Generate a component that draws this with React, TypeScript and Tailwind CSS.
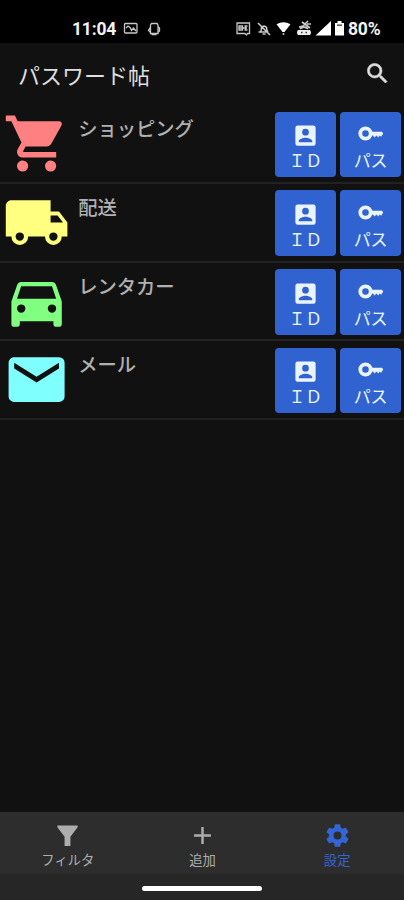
import React from "react";

const P = {
  cart: "M17 18a2 2 0 0 1 2 2 2 2 0 0 1-2 2 2 2 0 0 1-2-2c0-1.11.89-2 2-2M1 2h3.27l.94 2H20a1 1 0 0 1 1 1c0 .17-.05.34-.12.5l-3.58 6.47c-.34.61-1 1.03-1.75 1.03H8.1l-.9 1.63-.03.12a.25.25 0 0 0 .25.25H19v2H7a2 2 0 0 1-2-2c0-.35.09-.68.24-.96l1.36-2.45L3 4H1V2m6 16a2 2 0 0 1 2 2 2 2 0 0 1-2 2 2 2 0 0 1-2-2c0-1.11.89-2 2-2Z",
  truck: "M18 18.500a1.500 1.500 0 0 1-1.500-1.500 1.500 1.500 0 0 1 1.500-1.500 1.500 1.500 0 0 1 1.500 1.500 1.500 1.500 0 0 1-1.500 1.500m1.500-9 1.960 2.500H17V9.500m-11 9A1.500 1.500 0 0 1 4.500 17 1.500 1.500 0 0 1 6 15.500 1.500 1.500 0 0 1 7.500 17 1.500 1.500 0 0 1 6 18.500M20 8h-3V4H3c-1.110 0-2 .89-2 2v11h2a3 3 0 0 0 3 3 3 3 0 0 0 3-3h6a3 3 0 0 0 3 3 3 3 0 0 0 3-3h2v-5l-3-4Z",
  car: "M5 11l1.500-4.500h11L19 11m-1.500 5a1.500 1.500 0 0 1-1.500-1.500 1.500 1.500 0 0 1 1.500-1.500 1.500 1.500 0 0 1 1.500 1.500 1.500 1.500 0 0 1-1.500 1.500m-11 0A1.500 1.500 0 0 1 5 14.500 1.500 1.500 0 0 1 6.500 13 1.500 1.500 0 0 1 8 14.500 1.500 1.500 0 0 1 6.500 16M18.920 6c-.2-.58-.76-1-1.420-1h-11c-.66 0-1.220.42-1.420 1L3 12v8a1 1 0 0 0 1 1h1a1 1 0 0 0 1-1v-1h12v1a1 1 0 0 0 1 1h1a1 1 0 0 0 1-1v-8l-2.080-6Z",
  mail: "M20 8l-8 5-8-5V6l8 5 8-5m0-2H4c-1.110 0-2 .89-2 2v12a2 2 0 0 0 2 2h16a2 2 0 0 0 2-2V6a2 2 0 0 0-2-2Z",
  account: "M6 17c0-2 4-3.100 6-3.100s6 1.100 6 3.100v1H6m9-9a3 3 0 0 1-3 3 3 3 0 0 1-3-3 3 3 0 0 1 3-3 3 3 0 0 1 3 3M3 5v14a2 2 0 0 0 2 2h14a2 2 0 0 0 2-2V5a2 2 0 0 0-2-2H5a2 2 0 0 0-2 2Z",
  search: "M9.500 3A6.500 6.500 0 0 1 16 9.500c0 1.610-.59 3.090-1.560 4.230l.27.27h.79l5 5-1.500 1.500-5-5v-.79l-.27-.27A6.516 6.516 0 0 1 9.500 16 6.500 6.500 0 0 1 3 9.500 6.500 6.500 0 0 1 9.500 3m0 2C7 5 5 7 5 9.500S7 14 9.500 14 14 12 14 9.500 12 5 9.500 5Z",
  plus: "M19.500 13.100h-6.400v6.400h-2.200v-6.400H4.500v-2.200h6.400V4.500h2.200v6.400h6.400v2.200Z",
  filter: "M3 3h18v1.600L14.600 13v8.300H9.400V13L3 4.600Z",
  cog: "M12 15.500A3.500 3.500 0 0 1 8.500 12 3.500 3.500 0 0 1 12 8.500a3.500 3.500 0 0 1 3.500 3.500 3.500 3.500 0 0 1-3.500 3.500m7.430-2.530c.04-.32.07-.64.07-.97s-.03-.66-.07-1l2.110-1.630c.19-.15.24-.42.12-.64l-2-3.460c-.12-.22-.39-.31-.61-.22l-2.490 1c-.52-.39-1.060-.73-1.690-.98l-.37-2.650A.506.506 0 0 0 14 2h-4c-.25 0-.46.18-.5.42l-.37 2.650c-.63.25-1.170.59-1.690.98l-2.490-1c-.22-.09-.49 0-.61.22l-2 3.460c-.13.22-.07.49.12.64L4.570 11c-.04.34-.07.67-.07 1s.03.65.07.97l-2.110 1.660c-.19.15-.25.42-.12.64l2 3.460c.12.22.39.3.61.22l2.490-1.010c.52.4 1.060.74 1.690.99l.37 2.650c.04.24.25.42.5.42h4c.25 0 .46-.18.5-.42l.37-2.650c.63-.26 1.170-.59 1.690-.99l2.490 1.010c.22.08.49 0 .61-.22l2-3.460c.12-.22.07-.49-.12-.64l-2.110-1.660Z",
};

function Icon({ d, className }: { d: string; className: string }) {
  return (
    <svg viewBox="0 0 24 24" fill="currentColor" fillRule="evenodd" className={className}>
      <path d={d} />
    </svg>
  );
}

function KeyIcon() {
  return (
    <svg viewBox="0 0 26 24" fill="none" stroke="currentColor" className="h-[24px] w-[26px] shrink-0">
      <circle cx="7.500" cy="11.500" r="5.200" strokeWidth="3.800" />
      <path d="M12 9.800H24L25.200 11.500L23.200 14.800L21.700 13.600L20.200 15.400L18.500 13.600L16.500 15.400L15 13.400H12Z" fill="currentColor" stroke="none" />
    </svg>
  );
}

const rows = [
  { name: "ショッピング", icon: P.cart, color: "text-[#ff8080]" },
  { name: "配送", icon: P.truck, color: "text-[#ffff80]" },
  { name: "レンタカー", icon: P.car, color: "text-[#80ff80]" },
  { name: "メール", icon: P.mail, color: "text-[#80ffff]" },
];

const tabs = [
  { name: "フィルタ", icon: P.filter, color: "text-[#adadad]" },
  { name: "追加", icon: P.plus, color: "text-[#adadad]" },
  { name: "設定", icon: P.cog, color: "text-[#3465d6]" },
];

function StatusBar() {
  return (
    <div className="flex h-[43px] shrink-0 items-center bg-black pt-[15px] font-[Roboto,sans-serif] text-[17.500px] font-bold text-[#f2f2f2]">
      <span className="mt-px ml-[72px] w-[45px] leading-none tracking-[-0.2px]">11:04</span>
      <svg className="ml-[6px] h-[20px] w-[40px]" viewBox="0 0 40 20" fill="none" stroke="#c8c8c8" strokeWidth="1.300">
        <rect x="1.500" y="4.500" width="12.500" height="9.500" rx="1" />
        <path d="M3 9l2-2 2.500 2 1 2.500L10.500 9l2.500 3" />
        <path d="M27.500 6l1-1.500h5.500l1 1.500v8.500h-7.500zM27.500 8l-2 3.500 2 2M35 7.500l1.500 1.500v3L35 13.500M28.500 15.500h5" />
      </svg>
      <svg className="ml-[72px] h-[20px] w-[113px]" viewBox="0 0 113 20" fill="none" stroke="#c8c8c8" strokeWidth="1.300">
        <path d="M2 4h12.500v10.500H12.500l-1 1.500-1.500-1.500H2zM4 7h3.500v4H4zM9.500 7h3M9.500 11h3M10.500 7v4M4 9h8" />
        <path d="M23.500 13h9M25.500 13c1-1.500 1-2 1-4.500a3 3 0 0 1 5 0c0 2.500 0 3 1.500 4.500M27.500 15h3M23 4l12 12" strokeWidth="1.600" />
        <path d="M41.500 5.200Q48.500 1.200 55.500 5.200L49.500 13h-2z" fill="#fff" stroke="none" />
        <circle cx="48.500" cy="15" r="1.100" fill="#bbb" stroke="none" />
        <path d="M63 11h12q2 2.500 0 5H63q-2-2.500 0-5z" fill="#eee" stroke="none" />
        <path d="M65 10q4-4 8 0M64 8l4-1 5-5M67 3l8 6M72 5h4" strokeWidth="1.700" />
        <path d="M66 13.500h1.500M70.500 13.500H72" stroke="#333" />
        <path d="M96 2v14.500H80.500z" fill="#fff" stroke="none" />
        <path d="M102.500 2h4v2h2.500v12.500h-9V4h2.500z" fill="#fff" stroke="none" />
        <path d="M102 5.500h5v1.300h-5z" fill="#333" stroke="none" />
      </svg>
      <span className="mt-px leading-none tracking-[-0.2px]">80%</span>
    </div>
  );
}

export default function App() {
  return (
    <div className="flex h-[900px] w-[404px] flex-col overflow-hidden bg-[#111111] font-['Noto_Sans_CJK_JP',sans-serif]">
      <StatusBar />
      <header className="flex h-[62px] shrink-0 items-center justify-between pr-[13px] pl-[18px] text-[#dedede]">
        <h1 className="text-[22px] leading-none">パスワード帖</h1>
        <Icon d={P.search} className="-mt-px h-[27px] w-[27px] stroke-current stroke-[0.5px]" />
      </header>
      <main className="flex-1">
        {rows.map((r) => (
          <div key={r.name} className="flex h-[78.750px] border-b-2 border-[#222222] pl-[3px]">
            <Icon d={r.icon} className={"mt-[5px] h-[67.200px] w-[67.200px] shrink-0 " + r.color} />
            <span className="mt-[12px] ml-[8px] flex-1 text-[19.300px] leading-[22px] font-medium whitespace-nowrap text-[#b0b0b0]">{r.name}</span>
            <div className="mt-[6.500px] mr-[3px] flex h-[65.500px] gap-[4.500px] text-[#eaf4ff]">
              <button className="flex w-[60.750px] flex-col items-center rounded-[4px] bg-[#3163d0] pt-[10.500px]">
                <Icon d={P.account} className="h-[27px] w-[27px] shrink-0" />
                <span className="text-[17px] leading-[22px] whitespace-nowrap">ＩＤ</span>
              </button>
              <button className="flex w-[60.750px] flex-col items-center rounded-[4px] bg-[#3163d0] pt-[10.500px]">
                <KeyIcon />
                <span className="mt-[3px] text-[17px] leading-[22px] whitespace-nowrap">パス</span>
              </button>
            </div>
          </div>
        ))}
      </main>
      <footer className="h-[88px] shrink-0 bg-[#262626]">
        <nav className="grid h-[62px] grid-cols-3 bg-[#2d2d2d]">
          {tabs.map((t) => (
            <div key={t.name} className={"flex flex-col items-center pt-[10px] pl-[1px] " + t.color}>
              <Icon d={t.icon} className="h-[27px] w-[27px]" />
              <span className="mt-[3px] text-[13.300px] leading-[16px]">{t.name}</span>
            </div>
          ))}
        </nav>
        <div className="mx-auto mt-[12px] h-[5px] w-[120px] rounded-full bg-white" />
      </footer>
    </div>
  );
}
